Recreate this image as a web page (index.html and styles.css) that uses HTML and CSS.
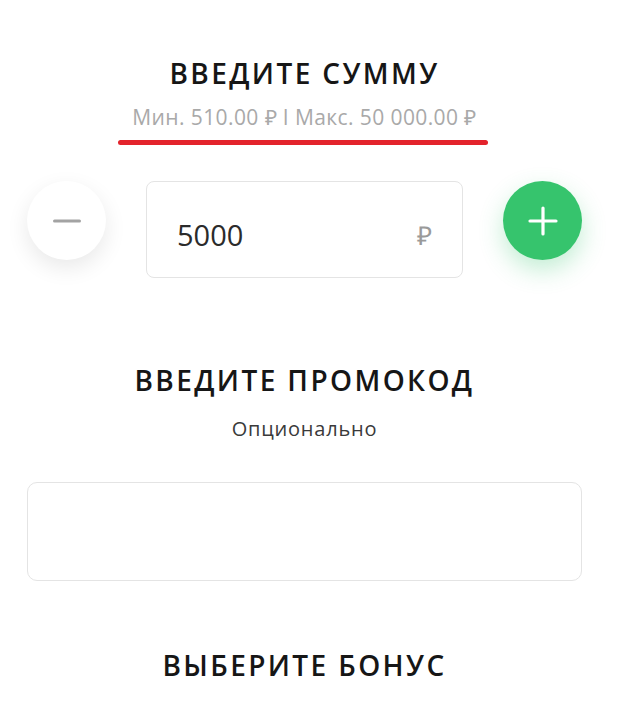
FILE: index.html
```html
<!DOCTYPE html>
<html lang="ru">
<head>
    <meta charset="UTF-8">
    <meta name="viewport" content="width=device-width, initial-scale=1.0">
    <title>Пополнение</title>
    <link rel="stylesheet" href="styles.css">
</head>
<body>
    <div class="form">
        <section class="block">
            <h2 class="title">Введите сумму</h2>
            <p class="limits">Мин. 510.00 ₽ I Макс. 50 000.00 ₽</p>
            <div class="underline"></div>
        </section>

        <div class="amount-row">
            <button class="round-btn minus" aria-label="Уменьшить">
                <svg width="28" height="4" viewBox="0 0 28 4"><rect x="0" y="0.5" width="28" height="3" rx="1.5" fill="#a3a3a3"/></svg>
            </button>
            <div class="amount-field">
                <span class="amount-value">5000</span>
                <span class="currency">₽</span>
            </div>
            <button class="round-btn plus" aria-label="Увеличить">
                <svg width="30" height="30" viewBox="0 0 30 30"><path d="M15 2v26M2 15h26" stroke="#fff" stroke-width="3.2" stroke-linecap="round"/></svg>
            </button>
        </div>

        <section class="block promo">
            <h2 class="title">Введите промокод</h2>
            <p class="hint">Опционально</p>
        </section>

        <div class="promo-field"></div>

        <section class="block bonus">
            <h2 class="title">Выберите бонус</h2>
        </section>
    </div>
</body>
</html>
```

FILE: styles.css
```css
* {
    margin: 0;
    padding: 0;
    box-sizing: border-box;
}

body {
    background: #fff;
    font-family: "Open Sans", Lato, sans-serif;
    color: #111;
    overflow: hidden;
}

.form {
    width: 555px;
    margin-left: 27px;
    padding-top: 55px;
}

.block {
    display: flex;
    flex-direction: column;
    align-items: center;
}

.title {
    font-size: 28px;
    font-weight: 600;
    text-transform: uppercase;
    letter-spacing: 2.4px;
    line-height: 36px;
    color: #161616;
}

.limits {
    margin-top: 13px;
    font-size: 21px;
    line-height: 26px;
    letter-spacing: 0.4px;
    color: #a9a9a9;
}

.underline {
    width: 370px;
    height: 5px;
    margin-top: 10px;
    margin-right: 3px;
    border-radius: 3px;
    background: #e3232c;
}

.amount-row {
    display: flex;
    align-items: flex-start;
    justify-content: space-between;
    margin-top: 36px;
}

.round-btn {
    width: 79px;
    height: 79px;
    border-radius: 50%;
    border: none;
    display: flex;
    align-items: center;
    justify-content: center;
    cursor: pointer;
}

.minus {
    background: #fff;
    box-shadow: 0 8px 22px rgba(0, 0, 0, 0.09);
}

.plus {
    background: #36c46d;
    box-shadow: 0 10px 24px rgba(54, 196, 109, 0.3);
}

.amount-field {
    width: 317px;
    height: 97px;
    border: 1.5px solid #e4e4e4;
    border-radius: 8px;
    display: flex;
    align-items: center;
    justify-content: space-between;
    padding: 10px 30px 0 30px;
}

.amount-value {
    font-size: 29px;
    color: #2b2b2b;
}

.currency {
    font-size: 26px;
    color: #9a9a9a;
}

.promo {
    margin-top: 84px;
}

.hint {
    margin-top: 19px;
    font-size: 20px;
    line-height: 24px;
    letter-spacing: 0.8px;
    color: #3a3a3a;
}

.promo-field {
    height: 99px;
    margin-top: 41px;
    border: 1.5px solid #e4e4e4;
    border-radius: 10px;
}

.bonus {
    margin-top: 66px;
}
```
